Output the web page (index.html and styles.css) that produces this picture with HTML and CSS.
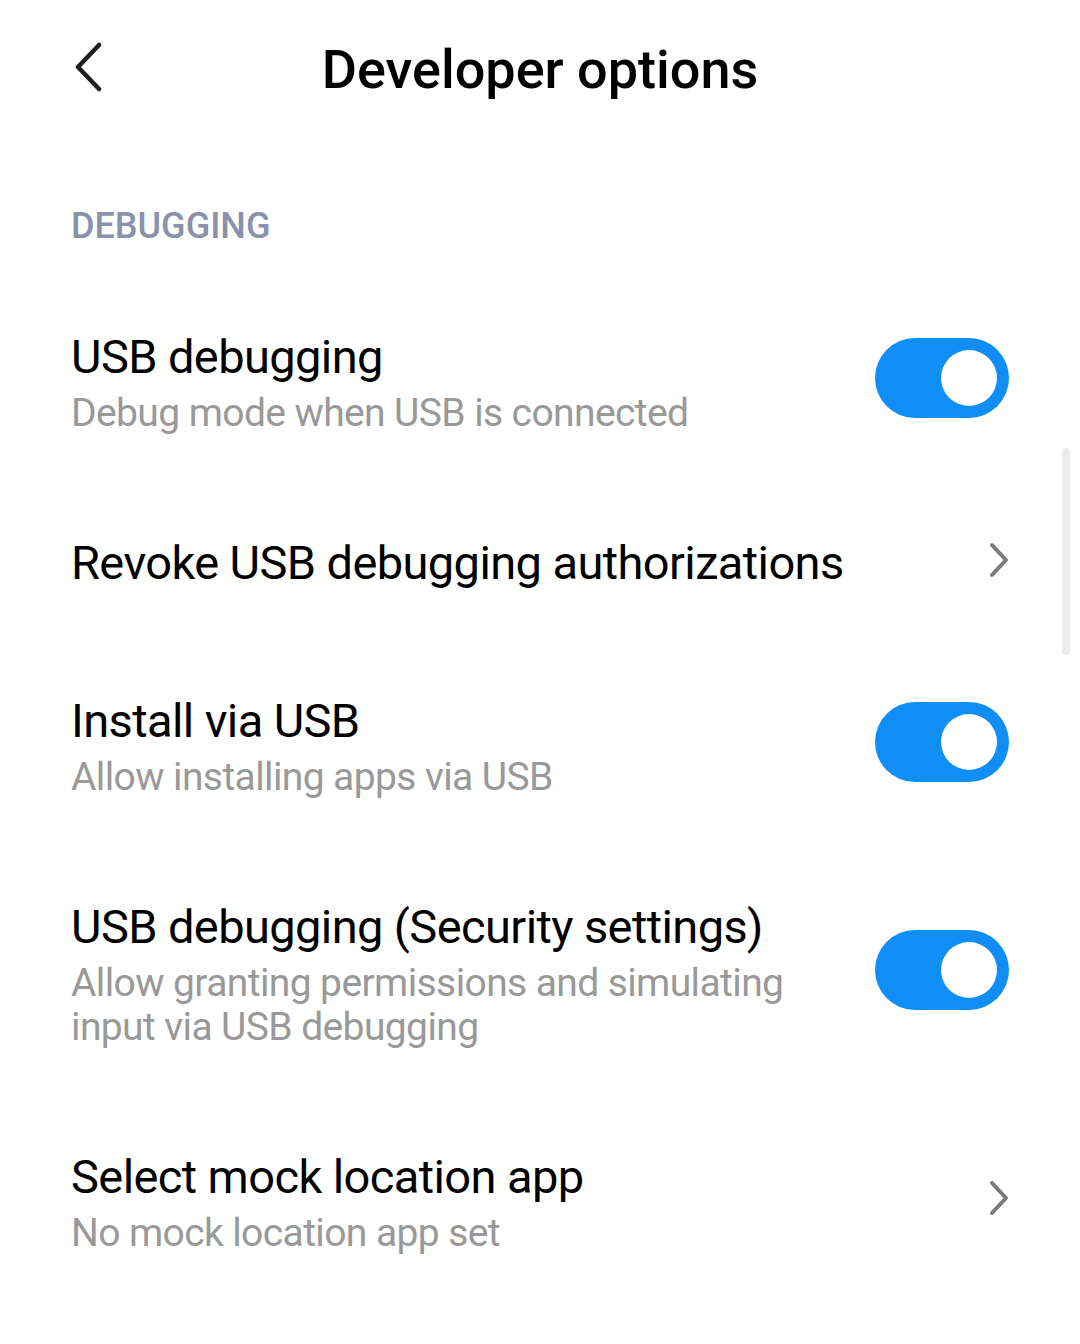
FILE: index.html
```html
<!DOCTYPE html>
<html lang="en">
<head>
    <meta charset="UTF-8">
    <meta name="viewport" content="width=device-width, initial-scale=1.0">
    <title>Developer options</title>
    <link rel="stylesheet" href="styles.css">
</head>
<body>
    <header class="topbar">
        <button class="back" aria-label="Back">
            <svg width="40" height="50" viewBox="0 0 40 50">
                <path d="M30 3 L9 25 L30 47" fill="none" stroke="#1f1f1f" stroke-width="4.5" stroke-linecap="round" stroke-linejoin="round"/>
            </svg>
        </button>
        <h1>Developer options</h1>
    </header>

    <div class="page">
        <h2 class="section-title">DEBUGGING</h2>

        <ul class="list">
            <li class="item">
                <div class="text">
                    <div class="title">USB debugging</div>
                    <div class="summary">Debug mode when USB is connected</div>
                </div>
                <span class="switch on"><span class="knob"></span></span>
            </li>
            <li class="item">
                <div class="text">
                    <div class="title">Revoke USB debugging authorizations</div>
                </div>
                <svg class="chevron" width="24" height="40" viewBox="0 0 24 40">
                    <path d="M5 5 L19 20 L5 35" fill="none" stroke="#7a7a7a" stroke-width="4" stroke-linecap="round" stroke-linejoin="round"/>
                </svg>
            </li>
            <li class="item">
                <div class="text">
                    <div class="title">Install via USB</div>
                    <div class="summary">Allow installing apps via USB</div>
                </div>
                <span class="switch on"><span class="knob"></span></span>
            </li>
            <li class="item">
                <div class="text">
                    <div class="title">USB debugging (Security settings)</div>
                    <div class="summary">Allow granting permissions and simulating<br>input via USB debugging</div>
                </div>
                <span class="switch on"><span class="knob"></span></span>
            </li>
            <li class="item">
                <div class="text">
                    <div class="title">Select mock location app</div>
                    <div class="summary">No mock location app set</div>
                </div>
                <svg class="chevron" width="24" height="40" viewBox="0 0 24 40">
                    <path d="M5 5 L19 20 L5 35" fill="none" stroke="#7a7a7a" stroke-width="4" stroke-linecap="round" stroke-linejoin="round"/>
                </svg>
            </li>
        </ul>
    </div>

    <div class="scrollbar"></div>
</body>
</html>
```

FILE: styles.css
```css
body {
    margin: 0;
    font-family: Roboto, "Noto Sans", Arial, sans-serif;
    background-color: #ffffff;
    color: #000;
}

.topbar {
    position: relative;
    height: 140px;
    display: flex;
    align-items: center;
    justify-content: center;
}

.topbar h1 {
    margin: 0;
    font-size: 54px;
    font-weight: 500;
    line-height: 60px;
}

.back {
    position: absolute;
    left: 69px;
    top: 42px;
    background: none;
    border: none;
    padding: 0;
    cursor: pointer;
}

.back svg {
    display: block;
}

.page {
    padding: 0 71px;
}

.section-title {
    margin: 0;
    padding-top: 64px;
    font-size: 36px;
    font-weight: 500;
    line-height: 44px;
    color: #8a91aa;
}

.list {
    list-style: none;
    margin: 0;
    padding: 0;
    margin-top: 30px;
}

.item {
    display: flex;
    align-items: center;
    justify-content: space-between;
    padding: 49px 0;
}

.title {
    font-size: 47px;
    line-height: 60px;
    letter-spacing: -0.6px;
}

.summary {
    margin-top: 4px;
    font-size: 39px;
    line-height: 44px;
    letter-spacing: -0.6px;
    color: #999999;
}

.switch {
    flex: none;
    position: relative;
    width: 134px;
    height: 80px;
    margin-bottom: 6px;
    border-radius: 40px;
    background-color: #0f8ef6;
}

.switch .knob {
    position: absolute;
    top: 12px;
    right: 12px;
    width: 56px;
    height: 56px;
    border-radius: 50%;
    background-color: #ffffff;
}

.chevron {
    flex: none;
    margin-right: -2px;
    margin-bottom: 6px;
}

.scrollbar {
    position: absolute;
    top: 448px;
    right: 10px;
    width: 8px;
    height: 207px;
    border-radius: 4px;
    background-color: #ececec;
}
```
